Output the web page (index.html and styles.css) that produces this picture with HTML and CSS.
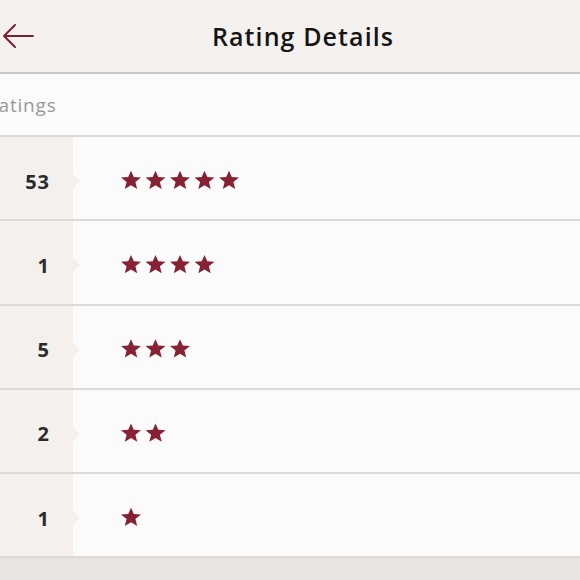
FILE: index.html
```html
<!DOCTYPE html>
<html>
<head>
<meta charset="utf-8">
<link rel="stylesheet" href="styles.css">
</head>
<body>
<header class="topbar">
  <button class="back" aria-label="Back">
    <svg width="34" height="26" viewBox="0 0 34 26"><path d="M32 13H3M14 2L3 13l11 11" fill="none" stroke="#7b2231" stroke-width="2" stroke-linecap="round" stroke-linejoin="round"/></svg>
  </button>
  <h1 class="title">Rating Details</h1>
</header>
<div class="summary"><span class="summary-text">62 Ratings</span></div>
<ul class="list">
  <li class="row"><div class="count">53</div><div class="stars"><span class="star"></span><span class="star"></span><span class="star"></span><span class="star"></span><span class="star"></span></div></li>
  <li class="row"><div class="count">1</div><div class="stars"><span class="star"></span><span class="star"></span><span class="star"></span><span class="star"></span></div></li>
  <li class="row"><div class="count">5</div><div class="stars"><span class="star"></span><span class="star"></span><span class="star"></span></div></li>
  <li class="row"><div class="count">2</div><div class="stars"><span class="star"></span><span class="star"></span></div></li>
  <li class="row"><div class="count">1</div><div class="stars"><span class="star"></span></div></li>
</ul>
<div class="footer"></div>
</body>
</html>
```
FILE: styles.css
```css
* { box-sizing: border-box; }
html, body { margin: 0; padding: 0; }
body {
  width: 580px;
  height: 580px;
  overflow: hidden;
  background: #e8e5e1;
  font-family: "Open Sans", Lato, sans-serif;
}
.topbar {
  height: 74px;
  background: #f4f1ee;
  border-bottom: 2px solid #c9c6c3;
  display: flex;
  align-items: center;
}
.back {
  border: 0;
  background: none;
  padding: 0 0 0 1px;
  width: 36px;
  height: 30px;
  display: flex;
  align-items: center;
}
.title {
  flex: 1;
  margin: 0;
  padding-right: 10px;
  text-align: center;
  font-size: 25px;
  font-weight: 600;
  letter-spacing: 1.1px;
  color: #151515;
}
.summary {
  height: 63px;
  background: #fcfbfb;
  border-bottom: 2px solid #dcd9d6;
  display: flex;
  align-items: center;
  overflow: hidden;
}
.summary-text {
  margin-left: -43px;
  font-size: 19px;
  letter-spacing: 0.8px;
  color: #9b9896;
  white-space: nowrap;
}
.list {
  list-style: none;
  margin: 0;
  padding: 0;
  background: #fcfbfb;
}
.row {
  height: 84.25px;
  display: flex;
  align-items: center;
  border-bottom: 2px solid #dcd9d6;
}
.count {
  position: relative;
  width: 73px;
  height: 100%;
  background: #f3f0ed;
  display: flex;
  align-items: center;
  justify-content: flex-end;
  padding-right: 23px;
  padding-top: 6px;
  font-size: 20px;
  font-weight: 700;
  letter-spacing: 1px;
  color: #2b2b2b;
}
.count::after {
  content: "";
  position: absolute;
  right: -7px;
  top: 50%;
  margin-top: -4px;
  border-left: 7px solid #f3f0ed;
  border-top: 7px solid transparent;
  border-bottom: 7px solid transparent;
}
.stars {
  display: flex;
  gap: 4.5px;
  margin-left: 48px;
  margin-top: 4px;
}
.star {
  width: 20px;
  height: 19px;
  background: #862233;
  clip-path: polygon(50% 0%, 64% 34%, 100% 36%, 72% 60%, 81% 97%, 50% 77%, 19% 97%, 28% 60%, 0% 36%, 36% 34%);
}
.footer { height: 30px; }
```
